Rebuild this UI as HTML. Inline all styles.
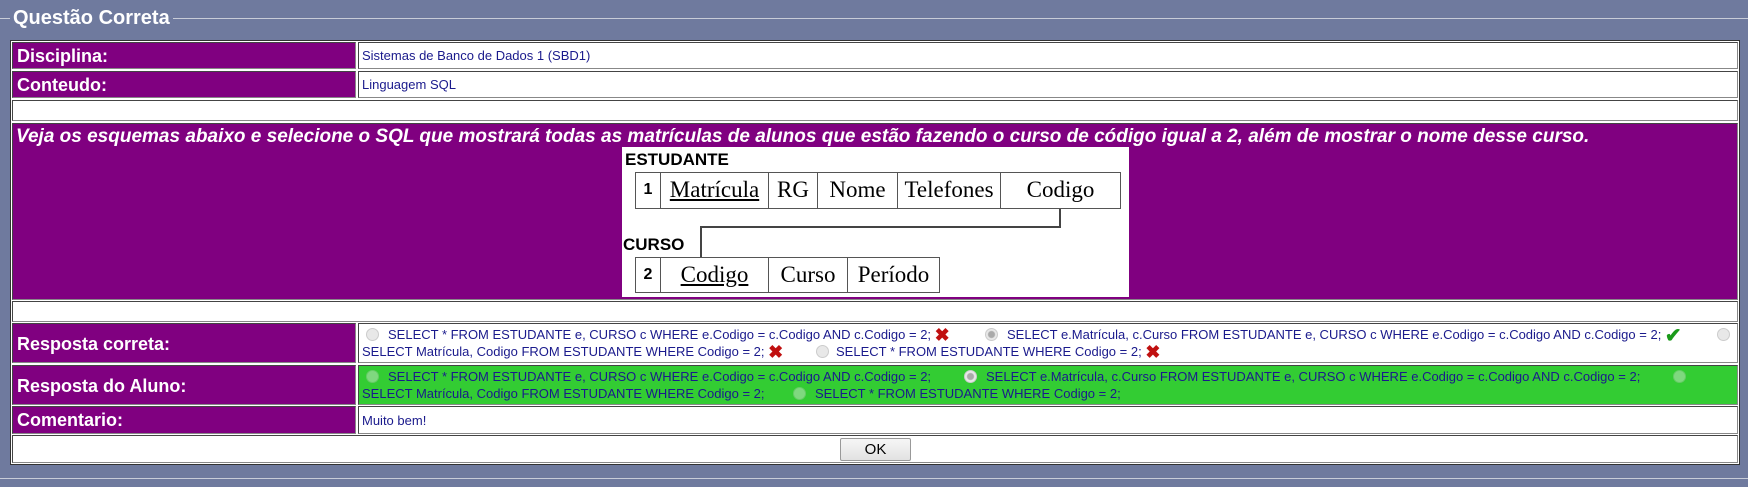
<!DOCTYPE html>
<html><head><meta charset="utf-8"><style>
*{margin:0;padding:0;box-sizing:border-box}
body{width:1748px;height:487px;background:#6f7a9e;position:relative;overflow:hidden;font-family:"Liberation Sans",sans-serif}
.a{position:absolute}
.fs{position:absolute;left:-2px;top:18px;width:1752px;height:461px;border:1px solid #c8ccd8}
.lg{position:absolute;left:10px;top:5px;background:#6f7a9e;color:#fff;font-weight:bold;font-size:20px;padding:0 3px;line-height:26px}
.tb{position:absolute;left:10px;top:40px;width:1730px;height:425px;background:#fff;border:1px solid #333}
.c{position:absolute;border:1px solid #888;border-top-color:#444;border-left-color:#444}
.p{background:#800080;color:#fff;font-weight:bold;font-size:18px;padding-left:4px;white-space:nowrap}
.w{background:#fff;color:#1a1a8c;font-size:13px;padding-left:3px;white-space:nowrap}
.w .a{white-space:nowrap}
.r{position:absolute;width:13px;height:13px;border-radius:50%;background:#e8e8e8;border:1px solid #ccc}
.rc{background:radial-gradient(circle,#aaa 0 3px,#e8e8e8 4px)}
.rg{background:#7fd87f;border-color:#6c6}
.x{color:#c01010;font-weight:bold;font-size:18px;vertical-align:-2px}
.ck{color:#1a9a1a;font-weight:bold;font-size:20px;vertical-align:-3px}
.d{position:absolute;border:1px solid #555;font-family:"Liberation Serif",serif;font-size:23px;color:#000;text-align:center;line-height:34px}
.dn{font-family:"Liberation Sans",sans-serif;font-weight:bold;font-size:16px}
</style></head><body>
<div class="fs"></div>
<div class="lg">Questão Correta</div>
<div class="tb"></div>
<div class="c p" style="left:12px;top:42px;width:344px;height:27px;line-height:26px">Disciplina:</div>
<div class="c w" style="left:358px;top:42px;width:1380px;height:27px;line-height:26px">Sistemas de Banco de Dados 1 (SBD1)</div>
<div class="c p" style="left:12px;top:71px;width:344px;height:27px;line-height:26px">Conteudo:</div>
<div class="c w" style="left:358px;top:71px;width:1380px;height:27px;line-height:26px">Linguagem SQL</div>
<div class="c" style="left:12px;top:100px;width:1726px;height:21px;background:#fff"></div>
<div class="c p" style="left:12px;top:123px;width:1726px;height:177px;font-style:italic;font-size:19px;line-height:26px;padding-left:3px">Veja os esquemas abaixo e selecione o SQL que mostrará todas as matrículas de alunos que estão fazendo o curso de código igual a 2, além de mostrar o nome desse curso.</div>
<div class="a" style="left:622px;top:147px;width:507px;height:150px;background:#fff"></div>
<div class="a dn" style="left:625px;top:150px;font-size:17px">ESTUDANTE</div>
<div class="d dn" style="left:635px;top:172px;width:26px;height:37px">1</div>
<div class="d" style="left:660px;top:172px;width:109px;height:37px"><u>Matrícula</u></div>
<div class="d" style="left:768px;top:172px;width:50px;height:37px">RG</div>
<div class="d" style="left:817px;top:172px;width:81px;height:37px">Nome</div>
<div class="d" style="left:897px;top:172px;width:104px;height:37px">Telefones</div>
<div class="d" style="left:1000px;top:172px;width:121px;height:37px">Codigo</div>
<div class="a" style="left:1059px;top:209px;width:2px;height:19px;background:#444"></div>
<div class="a" style="left:701px;top:226px;width:360px;height:2px;background:#444"></div>
<div class="a" style="left:700px;top:226px;width:2px;height:31px;background:#444"></div>
<div class="a dn" style="left:623px;top:235px;font-size:17px">CURSO</div>
<div class="d dn" style="left:635px;top:257px;width:26px;height:36px">2</div>
<div class="d" style="left:660px;top:257px;width:109px;height:36px"><u>Codigo</u></div>
<div class="d" style="left:768px;top:257px;width:80px;height:36px">Curso</div>
<div class="d" style="left:847px;top:257px;width:93px;height:36px">Período</div>
<div class="c" style="left:12px;top:301px;width:1726px;height:21px;background:#fff"></div>
<div class="c p" style="left:12px;top:323px;width:344px;height:40px;line-height:40px">Resposta correta:</div>
<div class="c w" style="left:358px;top:323px;width:1380px;height:40px;line-height:17px">
<span class="r" style="left:7px;top:4px"></span>
<div class="a" style="left:29px;top:2px">SELECT * FROM ESTUDANTE e, CURSO c WHERE e.Codigo = c.Codigo AND c.Codigo = 2; <span class="x">✖</span></div>
<span class="r rc" style="left:626px;top:4px"></span>
<div class="a" style="left:648px;top:2px">SELECT e.Matrícula, c.Curso FROM ESTUDANTE e, CURSO c WHERE e.Codigo = c.Codigo AND c.Codigo = 2; <span class="ck">✔</span></div>
<span class="r" style="left:1358px;top:4px"></span>
<div class="a" style="left:3px;top:19px">SELECT Matrícula, Codigo FROM ESTUDANTE WHERE Codigo = 2; <span class="x">✖</span></div>
<span class="r" style="left:457px;top:21px"></span>
<div class="a" style="left:477px;top:19px">SELECT * FROM ESTUDANTE WHERE Codigo = 2; <span class="x">✖</span></div>
</div>
<div class="c p" style="left:12px;top:365px;width:344px;height:40px;line-height:40px">Resposta do Aluno:</div>
<div class="c w" style="left:358px;top:365px;width:1380px;height:40px;line-height:17px;background:#33cc33">
<span class="r rg" style="left:7px;top:4px"></span>
<div class="a" style="left:29px;top:2px">SELECT * FROM ESTUDANTE e, CURSO c WHERE e.Codigo = c.Codigo AND c.Codigo = 2;</div>
<span class="r rc" style="left:605px;top:4px"></span>
<div class="a" style="left:627px;top:2px">SELECT e.Matrícula, c.Curso FROM ESTUDANTE e, CURSO c WHERE e.Codigo = c.Codigo AND c.Codigo = 2;</div>
<span class="r rg" style="left:1314px;top:4px"></span>
<div class="a" style="left:3px;top:19px">SELECT Matrícula, Codigo FROM ESTUDANTE WHERE Codigo = 2;</div>
<span class="r rg" style="left:434px;top:21px"></span>
<div class="a" style="left:456px;top:19px">SELECT * FROM ESTUDANTE WHERE Codigo = 2;</div>
</div>
<div class="c p" style="left:12px;top:406px;width:344px;height:28px;line-height:27px">Comentario:</div>
<div class="c w" style="left:358px;top:406px;width:1380px;height:28px;line-height:27px">Muito bem!</div>
<div class="c" style="left:12px;top:435px;width:1726px;height:28px;background:#fff"></div>
<div class="a" style="left:840px;top:438px;width:71px;height:23px;border:1px solid #999;border-radius:2px;background:linear-gradient(#f6f6f6,#e2e2e2);font-size:15px;text-align:center;line-height:21px;color:#000">OK</div>
</body></html>
